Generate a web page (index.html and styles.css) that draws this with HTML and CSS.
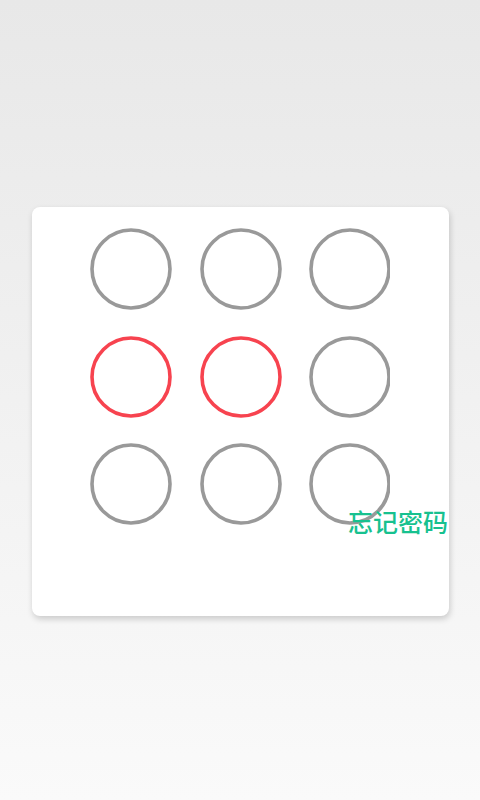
FILE: index.html
```html
<!DOCTYPE html>
<html lang="zh">
<head>
<meta charset="utf-8">
<link rel="stylesheet" href="styles.css">
</head>
<body>
<div class="screen">
  <div class="card">
    <div class="grid">
      <svg class="dot" viewBox="0 0 82 82"><circle cx="41" cy="41" r="39" /></svg>
      <svg class="dot" viewBox="0 0 82 82"><circle cx="41" cy="41" r="39" /></svg>
      <svg class="dot" viewBox="0 0 82 82"><circle cx="41" cy="41" r="39" /></svg>
      <svg class="dot on" viewBox="0 0 82 82"><circle cx="41" cy="41" r="39" /></svg>
      <svg class="dot on" viewBox="0 0 82 82"><circle cx="41" cy="41" r="39" /></svg>
      <svg class="dot" viewBox="0 0 82 82"><circle cx="41" cy="41" r="39" /></svg>
      <svg class="dot" viewBox="0 0 82 82"><circle cx="41" cy="41" r="39" /></svg>
      <svg class="dot" viewBox="0 0 82 82"><circle cx="41" cy="41" r="39" /></svg>
      <svg class="dot" viewBox="0 0 82 82"><circle cx="41" cy="41" r="39" /></svg>
    </div>
    <div class="forgot">忘记密码</div>
  </div>
</div>
</body>
</html>
```
FILE: styles.css
```css
html, body {
  margin: 0;
  padding: 0;
}
body {
  width: 480px;
  height: 800px;
  background: linear-gradient(to bottom, #e8e8e8 0%, #fafafa 100%);
  font-family: "Noto Sans CJK SC", "Noto Sans", sans-serif;
}
.screen {
  padding-top: 207px;
  padding-left: 32px;
}
.card {
  width: 417px;
  height: 409px;
  box-sizing: border-box;
  background: #ffffff;
  border-radius: 8px;
  box-shadow: 1px 3px 6px rgba(0, 0, 0, 0.18);
  padding: 21px 1px 0 58px;
}
.grid {
  width: 300px;
  overflow: hidden;
  display: grid;
  grid-template-columns: repeat(3, 82px);
  column-gap: 27.5px;
  row-gap: 25.5px;
}
.dot {
  width: 82px;
  height: 82px;
  display: block;
}
.dot circle {
  fill: none;
  stroke: #999999;
  stroke-width: 3.6;
}
.dot.on circle {
  stroke: #f7434f;
}
.forgot {
  margin-top: -20px;
  text-align: right;
  font-size: 25px;
  line-height: 32px;
  font-weight: 500;
  color: #17c18f;
}
```
